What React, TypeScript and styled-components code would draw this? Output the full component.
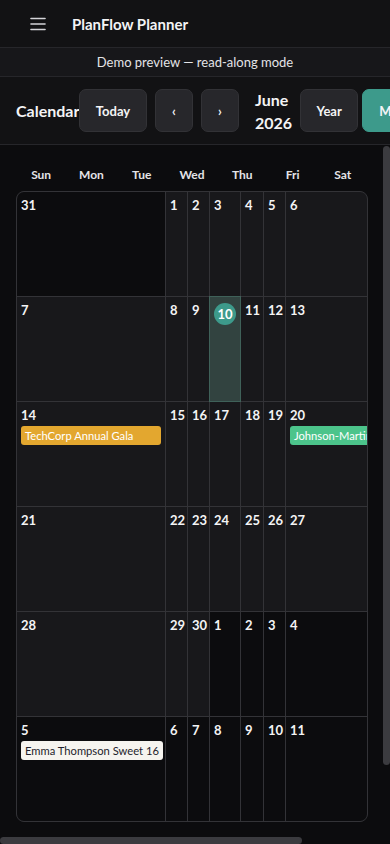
import styled, { createGlobalStyle } from 'styled-components'

const GlobalStyle = createGlobalStyle`
  html {
    height: 100%;
    overflow: hidden;
    background: #0c0c0e;
  }
  body {
    margin: 0;
    height: 100%;
    font-family: Lato, 'Open Sans', sans-serif;
    color: #f4f4f5;
  }
  #root {
    height: 100%;
  }
`

type Tone = 'amber' | 'green' | 'light'

type Day = {
  n: number
  out?: boolean
  today?: boolean
  event?: { title: string; tone: Tone }
}

const weeks: Day[][] = [
  [{ n: 31, out: true }, { n: 1 }, { n: 2 }, { n: 3 }, { n: 4 }, { n: 5 }, { n: 6 }],
  [{ n: 7 }, { n: 8 }, { n: 9 }, { n: 10, today: true }, { n: 11 }, { n: 12 }, { n: 13 }],
  [
    { n: 14, event: { title: 'TechCorp Annual Gala', tone: 'amber' } },
    { n: 15 }, { n: 16 }, { n: 17 }, { n: 18 }, { n: 19 },
    { n: 20, event: { title: 'Johnson-Martin Wedding', tone: 'green' } },
  ],
  [{ n: 21 }, { n: 22 }, { n: 23 }, { n: 24 }, { n: 25 }, { n: 26 }, { n: 27 }],
  [
    { n: 28 }, { n: 29 }, { n: 30 },
    { n: 1, out: true }, { n: 2, out: true }, { n: 3, out: true }, { n: 4, out: true },
  ],
  [
    { n: 5, out: true, event: { title: 'Emma Thompson Sweet 16', tone: 'light' } },
    { n: 6, out: true }, { n: 7, out: true }, { n: 8, out: true },
    { n: 9, out: true }, { n: 10, out: true }, { n: 11, out: true },
  ],
]

const weekdays = ['Sun', 'Mon', 'Tue', 'Wed', 'Thu', 'Fri', 'Sat']

const toneColors: Record<Tone, { bg: string; fg: string }> = {
  amber: { bg: '#e3a72f', fg: '#ffffff' },
  green: { bg: '#4cc48b', fg: '#ffffff' },
  light: { bg: '#f6f4ef', fg: '#1e1e2c' },
}

const Shell = styled.div`
  position: relative;
  display: flex;
  flex-direction: column;
  height: 100%;
`

const TopBar = styled.header`
  display: flex;
  align-items: center;
  flex-shrink: 0;
  height: 47px;
  padding-left: 30px;
  background: #121214;
  border-bottom: 1px solid #26262a;
`

const MenuButton = styled.span`
  display: flex;
  width: 16px;
  color: #d4d4d8;
`

const AppTitle = styled.h1`
  margin: 0 0 0 26px;
  font-size: 15px;
  font-weight: 700;
  color: #f4f4f5;
`

const DemoBar = styled.div`
  flex-shrink: 0;
  height: 28px;
  line-height: 28px;
  text-align: center;
  font-size: 13px;
  color: #e4e4e7;
  background: #17171a;
  border-bottom: 1px solid #26262a;
`

const Toolbar = styled.div`
  display: flex;
  align-items: center;
  flex-shrink: 0;
  height: 67px;
  padding-left: 16px;
  background: #121214;
  border-bottom: 1px solid #26262a;
`

const PageTitle = styled.h2`
  margin: 0;
  flex-shrink: 0;
  width: 63px;
  font-size: 16px;
  font-weight: 700;
  white-space: nowrap;
`

const ButtonGroup = styled.div<{ $gap: number }>`
  display: flex;
  flex-shrink: 0;
  gap: ${(p) => p.$gap}px;
`

const ToolButton = styled.button<{ $active?: boolean; $width?: number }>`
  flex-shrink: 0;
  height: 43px;
  width: ${(p) => (p.$width ? `${p.$width}px` : 'auto')};
  padding: ${(p) => (p.$width ? '0' : '0 16px')};
  border-radius: 7px;
  border: 1px solid ${(p) => (p.$active ? '#3d9a8b' : '#323236')};
  background: ${(p) => (p.$active ? '#3d9a8b' : '#27272b')};
  color: #f4f4f5;
  font-family: inherit;
  font-size: 13px;
  font-weight: 700;
`

const Period = styled.div`
  flex-shrink: 0;
  margin: 0 8px 0 16px;
  font-size: 16px;
  font-weight: 700;
  line-height: 23px;
`

const Body = styled.div`
  position: relative;
  flex: 1;
  min-height: 0;
`

const ScrollArea = styled.main`
  height: 100%;
  box-sizing: border-box;
  overflow: hidden;
  padding: 16px 16px 0;
  background: #0c0c0e;
`

const ScrollThumb = styled.div<{ $axis: 'x' | 'y' }>`
  position: absolute;
  border-radius: 4px;
  background: #3b3b3f;
  ${(p) =>
    p.$axis === 'y'
      ? 'top: 1px; right: 0; width: 7px; height: 619px;'
      : 'bottom: 0; left: 0; width: 302px; height: 7px;'}
`

const WeekdayRow = styled.div`
  display: grid;
  grid-template-columns: repeat(7, 1fr);
  width: 352px;
  height: 30px;
`

const Weekday = styled.div`
  text-align: center;
  font-size: 12px;
  font-weight: 700;
  line-height: 28px;
  color: #e4e4e7;
`

const MonthGrid = styled.div`
  display: grid;
  grid-template-columns: 148px 21px 21px 30px 22px 21px 81px;
  grid-auto-rows: 104px;
  gap: 1px;
  width: 352px;
  box-sizing: border-box;
  border: 1px solid #333337;
  border-radius: 8px;
  background: #333337;
  overflow: hidden;
`

const Cell = styled.div<{ $out?: boolean; $today?: boolean }>`
  position: relative;
  min-width: 0;
  padding: 5px 0 0;
  background: ${(p) => (p.$today ? '#324340' : p.$out ? '#0c0c0e' : '#18181b')};
  outline: ${(p) => (p.$today ? '1px solid #3f6159' : 'none')};
  z-index: ${(p) => (p.$today ? 1 : 0)};
`

const DateNum = styled.div`
  height: 19px;
  padding-left: 4px;
  font-size: 13px;
  font-weight: 700;
  line-height: 17px;
  color: #f4f4f5;
`

const TodayBadge = styled.div`
  display: flex;
  align-items: center;
  justify-content: center;
  width: 22px;
  height: 22px;
  margin: 1px 0 0 4px;
  border-radius: 50%;
  background: #3d9a8b;
  font-size: 13px;
  font-weight: 700;
  color: #ffffff;
`

const EventChip = styled.div<{ $tone: Tone }>`
  min-width: max-content;
  margin: 0 4px;
  padding: 2px 4px;
  border-radius: 3px;
  background: ${(p) => toneColors[p.$tone].bg};
  color: ${(p) => toneColors[p.$tone].fg};
  font-size: 11.2px;
  line-height: 15px;
  white-space: nowrap;
`

const MenuIcon = () => (
  <svg width="16" height="14" viewBox="0 0 16 14" fill="none" stroke="currentColor" strokeWidth="1.6" strokeLinecap="round">
    <line x1="1" y1="1.5" x2="15" y2="1.5" />
    <line x1="1" y1="7" x2="15" y2="7" />
    <line x1="1" y1="12.5" x2="15" y2="12.5" />
  </svg>
)

export default function App() {
  return (
    <>
      <GlobalStyle />
      <Shell>
        <TopBar>
          <MenuButton>
            <MenuIcon />
          </MenuButton>
          <AppTitle>PlanFlow Planner</AppTitle>
        </TopBar>
        <DemoBar>Demo preview — read-along mode</DemoBar>
        <Toolbar>
          <PageTitle>Calendar</PageTitle>
          <ButtonGroup $gap={8}>
            <ToolButton $width={68}>Today</ToolButton>
            <ToolButton $width={38}>‹</ToolButton>
            <ToolButton $width={38}>›</ToolButton>
          </ButtonGroup>
          <Period>
            June
            <br />
            2026
          </Period>
          <ButtonGroup $gap={4}>
            <ToolButton $width={58}>Year</ToolButton>
            <ToolButton $active>Month</ToolButton>
            <ToolButton>Week</ToolButton>
          </ButtonGroup>
        </Toolbar>
        <Body>
          <ScrollArea>
            <WeekdayRow>
              {weekdays.map((d) => (
                <Weekday key={d}>{d}</Weekday>
              ))}
            </WeekdayRow>
            <MonthGrid>
              {weeks.flat().map((day, i) => (
                <Cell key={i} $out={day.out} $today={day.today}>
                  {day.today ? <TodayBadge>{day.n}</TodayBadge> : <DateNum>{day.n}</DateNum>}
                  {day.event && <EventChip $tone={day.event.tone}>{day.event.title}</EventChip>}
                </Cell>
              ))}
            </MonthGrid>
          </ScrollArea>
          <ScrollThumb $axis="y" />
        </Body>
        <ScrollThumb $axis="x" />
      </Shell>
    </>
  )
}
